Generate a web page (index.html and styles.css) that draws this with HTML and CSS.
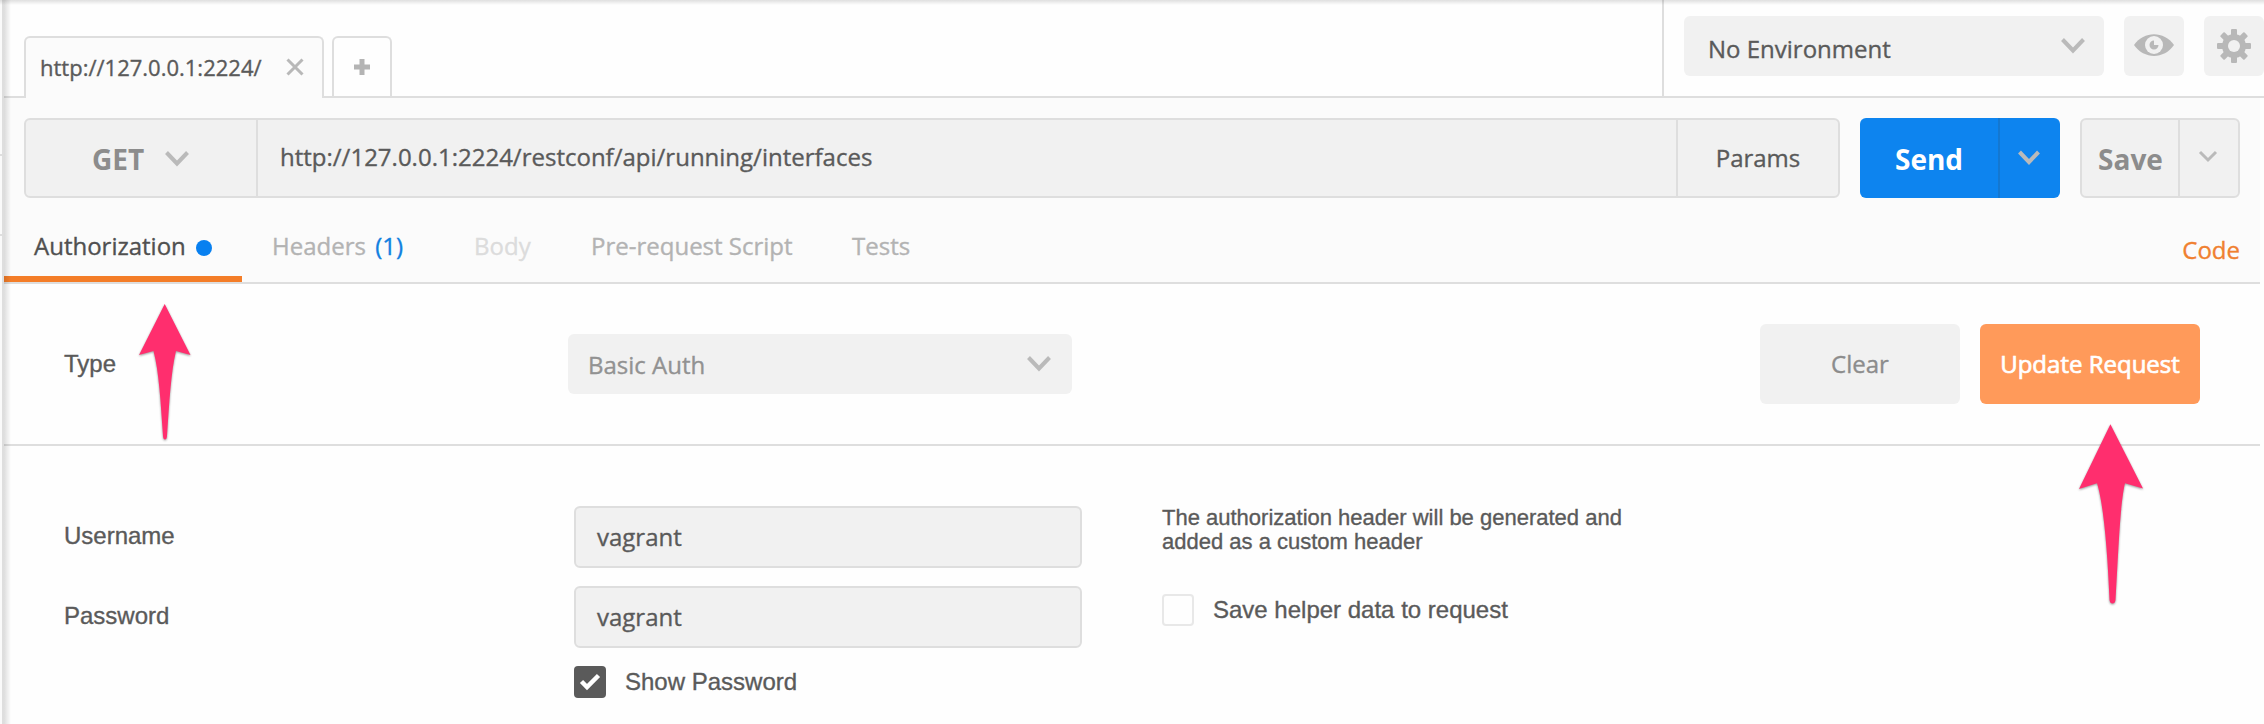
FILE: index.html
```html
<!DOCTYPE html>
<html lang="en">
<head>
<meta charset="utf-8">
<title>Request builder</title>
<link rel="stylesheet" href="styles.css">
</head>
<body>
<div class="app">
  <div class="sidebar-edge"></div>
  <main class="main">
    <header class="topbar">
      <div class="tabs">
        <div class="tab tab-active"><span class="tab-title">http://127.0.0.1:2224/</span>
          <svg class="tab-close" width="18" height="18" viewBox="0 0 18 18"><path d="M1.5 1.5 16.5 16.5M16.5 1.5 1.5 16.5"/></svg>
        </div>
        <div class="tab tab-new"><svg width="16" height="16" viewBox="0 0 16 16"><path d="M8 0V16M0 8H16"/></svg></div>
      </div>
      <div class="environment">
        <div class="select env-select"><span class="env-name">No Environment</span>
          <svg class="chevron" width="26" height="18" viewBox="0 0 26 18"><path d="M2.5 2.5 13 13.5 23.5 2.5"/></svg>
        </div>
        <div class="icon-button">
          <svg class="eye" width="40" height="24" viewBox="0 0 40 24"><path class="fill" d="M0 12C10-2.500 30-2.500 40 12 30 26.500 10 26.500 0 12Z"/><circle cx="20" cy="12" r="9" fill="#f1f1f1"/><path class="fill" d="M20 7.5V12H24.5A4.5 4.5 0 1 1 20 7.5Z"/></svg>
        </div>
        <div class="icon-button">
          <svg class="gear" width="34" height="34" viewBox="-17 -17 34 34"><g class="fill"><rect id="tooth" x="-3" y="-17" width="6" height="34" rx="1"/><use href="#tooth" transform="rotate(45)"/><use href="#tooth" transform="rotate(90)"/><use href="#tooth" transform="rotate(135)"/><circle r="12"/></g><circle r="6" fill="#f1f1f1"/></svg>
        </div>
      </div>
    </header>

    <section class="request">
      <div class="request-line">
        <div class="url-group">
          <div class="method"><span>GET</span><svg class="chevron" width="26" height="18" viewBox="0 0 26 18"><path d="M2.5 2.5 13 13.5 23.5 2.5"/></svg></div>
          <div class="url">http://127.0.0.1:2224/restconf/api/running/interfaces</div>
          <div class="params">Params</div>
        </div>
        <div class="split send">
          <div class="split-label">Send</div>
          <div class="split-more"><svg class="chevron" width="24" height="16" viewBox="0 0 24 16"><path d="M2.5 2 12 12 21.5 2"/></svg></div>
        </div>
        <div class="split save">
          <div class="split-label">Save</div>
          <div class="split-more"><svg class="chevron thin" width="20" height="14" viewBox="0 0 20 14"><path d="M2 2 10 10 18 2"/></svg></div>
        </div>
      </div>
      <nav class="sections">
        <div class="section active">Authorization<i class="dot"></i></div>
        <div class="section headers">Headers <b>(1)</b></div>
        <div class="section body">Body</div>
        <div class="section script">Pre-request Script</div>
        <div class="section tests">Tests</div>
        <a class="code">Code</a>
      </nav>
    </section>

    <section class="auth-type">
      <span class="label type-label">Type</span>
      <div class="select type-select"><span>Basic Auth</span>
        <svg class="chevron" width="26" height="18" viewBox="0 0 26 18"><path d="M2.5 2.5 13 13.5 23.5 2.5"/></svg>
      </div>
      <div class="button clear">Clear</div>
      <div class="button update">Update Request</div>
    </section>

    <section class="credentials">
      <div class="labels"><div class="label">Username</div><div class="label">Password</div></div>
      <div class="fields">
        <div class="input">vagrant</div>
        <div class="input">vagrant</div>
        <div class="check-row"><span class="checkbox checked"><svg width="22" height="18" viewBox="0 0 22 18"><path d="M2.5 8.5 8 14 19.5 2.5"/></svg></span><span class="label show-label">Show Password</span></div>
      </div>
      <div class="helper">
        <p class="hint">The authorization header will be generated and<br>added as a custom header</p>
        <div class="check-row"><span class="checkbox"></span><span class="label helper-label">Save helper data to request</span></div>
      </div>
    </section>
  </main>
  <div class="edge-shadow"></div>
  <div class="top-shadow"></div>
  <svg class="arrow arrow-auth" width="60" height="144" viewBox="0 0 60 144"><path d="M29.7 4 55.5 55 41 51C36 72 34.500 100 32 136Q31.700 139.500 30 139.500T28 136C25.500 100 24 72 18.500 51L4 55Z"/></svg>
  <svg class="arrow arrow-update" width="74" height="188" viewBox="0 0 74 188"><path d="M36.400 4.300 69 68.500 51 63.300C46 84 44.500 130 41.500 180Q41 183.500 38.500 183.500T35.500 180C33.500 130 29.500 84 23 63.300L5 69Z"/></svg>
</div>
</body>
</html>
```
FILE: styles.css
```css
* { box-sizing: border-box; }
body { margin: 0; background: #fefefe; color: #5a5a5a; font: 24px/40px "Open Sans", sans-serif; -webkit-text-stroke: .35px; }
.app { position: relative; display: flex; width: 2264px; height: 724px; overflow: hidden; }
.sidebar-edge { width: 4px; border-right: 2px solid #dedede; background: linear-gradient(#dedede, #dedede) 0 154px / 2px 2px no-repeat, linear-gradient(#dedede, #dedede) 0 234px / 2px 2px no-repeat, #fafafa; }
.main { width: 2260px; display: flex; flex-direction: column; }
svg { display: block; flex: none; }
.chevron { fill: none; stroke: #bababa; stroke-width: 4; }
.chevron.thin { stroke-width: 3; }
.fill { fill: #b8b8b8; }

/* Tabs and environment */
.topbar { display: flex; height: 98px; border-bottom: 2px solid #dedede; }
.tabs { display: flex; flex: 1; gap: 8px; padding: 36px 0 0 20px; }
.tab { display: flex; align-items: center; border: 2px solid #dedede; border-bottom: 0; border-radius: 6px 6px 0 0; height: 60px; }
.tab-active { width: 300px; height: 62px; background: #fbfbfb; padding: 0 0 2px 14px; }
.tab-title { font-size: 22px; width: 230px; white-space: nowrap; }
.tab-close { margin-left: 16px; fill: none; stroke: #b8b8b8; stroke-width: 3; }
.tab-new { width: 60px; padding: 0 0 0 20px; stroke: #b4b4b4; stroke-width: 5; }
.environment { display: flex; gap: 20px; width: 602px; padding: 16px 0 0 20px; border-left: 2px solid #dedede; }
.select { display: flex; justify-content: space-between; background: #f1f1f1; border-radius: 6px; height: 60px; line-height: 60px; }
.env-select { width: 420px; padding: 0 18px 0 24px; }
.env-name { padding-top: 3px; }
.env-select .chevron { margin-top: 21px; }
.icon-button { width: 60px; height: 60px; border-radius: 6px; background: #f1f1f1; }
.eye { margin: 17px 0 0 10px; }
.gear { margin: 13px 0 0 13px; }

/* Request line */
.request { width: 2256px; height: 186px; padding: 20px 20px 0; background: #fbfbfb; border-bottom: 2px solid #dedede; }
.request-line { display: flex; gap: 20px; height: 80px; }
.url-group { display: flex; width: 1816px; border: 2px solid #dedede; border-radius: 6px; background: #f1f1f1; line-height: 76px; }
.method { display: flex; width: 232px; padding: 1px 0 0 66px; border-right: 2px solid #dedede; color: #8c8c8c; font-weight: 700; font-size: 28px; -webkit-text-stroke: 0; }
.method span { width: 72px; }
.method .chevron { margin-top: 29px; }
.url { flex: 1; padding-left: 22px; line-height: 73px; }
.params { width: 162px; border-left: 2px solid #dedede; text-align: center; }
.split { display: flex; border-radius: 6px; font-weight: 700; font-size: 28px; line-height: 80px; text-align: center; -webkit-text-stroke: 0; }
.split-more { display: flex; justify-content: center; }
.send { width: 200px; background: #0d84ef; color: #fff; }
.send .split-label { width: 138px; padding-top: 1px; }
.send .split-more { width: 62px; border-left: 2px solid #1378d2; padding: 32px 3px 0 0; }
.save { width: 160px; border: 2px solid #dedede; background: #f1f1f1; color: #8c8c8c; }
.save .split-label { width: 96px; padding-left: 1px; line-height: 78px; }
.save .split-more { width: 60px; border-left: 2px solid #dedede; padding: 30px 3px 0 0; }

/* Section tabs */
.sections { display: flex; height: 84px; margin-left: -20px; padding-top: 28px; white-space: nowrap; color: #b3b3b3; }
.section { height: 56px; }
.section b { color: #1180e0; font-weight: 400; margin-left: 3px; }
.active { display: flex; width: 238px; padding-left: 30px; border-bottom: 6px solid #f47d28; color: #505050; }
.dot { width: 16px; height: 16px; margin: 14px 0 0 10px; border-radius: 50%; background: #0880f0; }
.headers { width: 232px; padding-left: 30px; }
.body { width: 117px; color: #dcdcdc; }
.script { width: 261px; }
.code { margin: 4px 0 0 auto; color: #f08030; }

/* Authorization type */
.auth-type { display: flex; align-items: flex-start; width: 2256px; height: 162px; padding: 40px 60px 0; border-bottom: 2px solid #dedede; }
.label { font-family: "Liberation Sans", sans-serif; font-size: 24px; }
.type-label { width: 504px; line-height: 80px; }
.type-select { width: 504px; margin-top: 10px; padding: 0 20px; line-height: 61px; color: #929292; }
.type-select .chevron { margin-top: 21px; }
.button { height: 80px; line-height: 80px; border-radius: 6px; text-align: center; background: #f1f1f1; color: #8c8c8c; }
.clear { width: 200px; margin-left: auto; margin-right: 20px; }
.update { width: 220px; background: #ff9a5a; color: #fff; -webkit-text-stroke: .7px; }

/* Credentials */
.credentials { display: flex; padding: 60px 0 0 60px; }
.labels { width: 510px; line-height: 60px; display: flex; flex-direction: column; gap: 20px; }
.fields { display: flex; flex-direction: column; width: 508px; margin-right: 80px; }
.input { height: 62px; line-height: 58px; border: 2px solid #dedede; border-radius: 6px; background: #f1f1f1; padding-left: 21px; margin-bottom: 18px; }
.check-row { display: flex; height: 32px; line-height: 31px; gap: 19px; }
.checkbox { width: 32px; height: 32px; border: 2px solid #e8e8e8; border-radius: 4px; }
.checked { border: 0; background: #5a5a5a; padding: 7px 0 0 5px; fill: none; stroke: #fff; stroke-width: 4.500; }
.hint { margin: 0 0 28px; padding-bottom: 12px; font: 22px/24px "Liberation Sans", sans-serif; }

/* Window-edge shading */
.edge-shadow { position: absolute; left: 4px; top: 0; width: 7px; height: 724px; background: linear-gradient(90deg, rgba(0,0,0,.13), rgba(0,0,0,0)); }
.top-shadow { position: absolute; left: 0; top: 0; width: 2264px; height: 5px; background: linear-gradient(rgba(0,0,0,.12), rgba(0,0,0,0)); }

/* Callout arrows */
.arrow { position: absolute; fill: #ff2e6e; filter: drop-shadow(0 1px 1px rgba(0,0,0,.4)); }
.arrow-auth { left: 135px; top: 300px; }
.arrow-update { left: 2074px; top: 420px; }
```
